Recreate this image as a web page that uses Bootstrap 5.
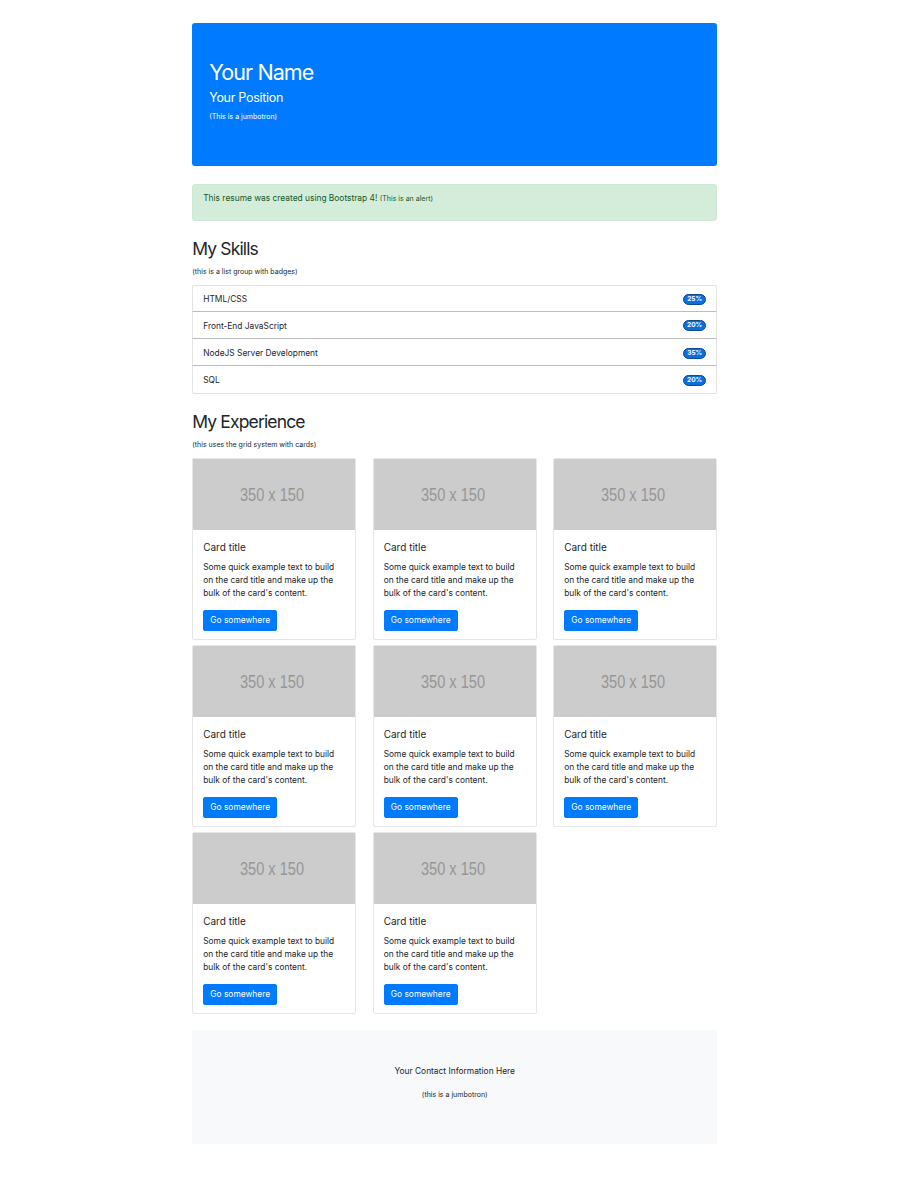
<!DOCTYPE html>
<html lang="en">
<head>
<meta charset="utf-8">
<title>Resume</title>
<link rel="stylesheet" href="https://cdn.jsdelivr.net/npm/bootstrap@5.3.0/dist/css/bootstrap.min.css">
<style>
body{font-family:Inter,"Noto Sans",sans-serif;font-size:8.4px;line-height:1.5;color:#212529;background:#fff;padding-right:5.6px}
.sheet{width:525px;margin:0 auto;padding:23px 0 46px 0}
.hero-top{height:143px;background:#007bff;border-radius:3px;padding:2.5px 17px 0;color:#fff;display:flex;flex-direction:column;justify-content:center}
.hero-top h1{font-size:21.5px;font-weight:400;letter-spacing:-.9px;line-height:1.2;margin:0 0 5px}
.hero-top h2{font-size:12.5px;font-weight:400;letter-spacing:-.3px;line-height:1.2;margin:0 0 7px}
.tiny{font-size:7px;line-height:1.5}
.hero-top .tiny{display:block;margin-bottom:9px}
.note{margin:18px 0 0;height:37px;background:#d4edda;border:1px solid #cde9d4;border-radius:3px;color:#155724;padding:7px 10px;font-size:8.4px}
.head{font-size:17.5px;font-weight:400;letter-spacing:-.85px;line-height:1.2;margin:17px 0 7.5px}
.sub{display:block;font-size:7px;line-height:10px;margin-bottom:8px}
.sub-grid{margin-top:8.5px;margin-bottom:8.4px}
.skills{--bs-list-group-border-radius:2px}
.skills .list-group-item{height:27.25px;padding:2px 10px 0;font-size:8.4px;display:flex;justify-content:space-between;align-items:center;color:#212529;border-color:#e3e3e3;border-bottom-color:#bdbdbd}
.skills .list-group-item:last-child{border-bottom-color:#e3e3e3}
.pct{background:#0b6fe0;border:1px solid #0d4a8f;color:#fff;font-size:6.5px;font-weight:700;border-radius:7px;line-height:9px;padding:0 3px;min-width:23px;text-align:center}
.cards{--bs-gutter-x:16.5px;--bs-gutter-y:5px}
.job{--bs-card-border-radius:2px;--bs-card-inner-border-radius:1px;border-color:#e6e6e6;height:182px}
.ph{display:block;flex:none;width:100%;height:71px;background:#ccc}
.ph text{fill:#969696;font-family:"Liberation Sans",sans-serif;font-size:17.6px;text-anchor:middle}
.job .card-body{padding:10px}
.job .card-title{font-size:10px;font-weight:400;line-height:1.2;margin:.5px 0 8px;color:#212529}
.job .card-text{font-size:8.4px;line-height:13.2px;margin:0 0 9px}
.go{--bs-btn-bg:#007bff;--bs-btn-border-color:#007bff;--bs-btn-hover-bg:#0069d9;--bs-btn-color:#fff;--bs-btn-border-radius:2px;font-size:8.4px;line-height:13px;padding:3px 6px;height:21px;width:74px;white-space:nowrap}
.hero-foot{margin-top:15.6px;height:114px;padding-bottom:9px;background:#f8f9fa;text-align:center;color:#212529;display:flex;flex-direction:column;justify-content:center}
.hero-foot p{font-size:8.4px;margin:0 0 12px;line-height:13px}
.hero-foot .tiny{display:block}
</style>
</head>
<body>
<div class="sheet">
  <div class="hero-top">
    <h1>Your Name</h1>
    <h2>Your Position</h2>
    <span class="tiny">(This is a jumbotron)</span>
  </div>
  <div class="note" role="alert">This resume was created using Bootstrap 4! <span class="tiny">(This is an alert)</span></div>

  <h3 class="head">My Skills</h3>
  <span class="sub">(this is a list group with badges)</span>
  <ul class="list-group skills">
    <li class="list-group-item">HTML/CSS <span class="pct">25%</span></li>
    <li class="list-group-item">Front-End JavaScript <span class="pct">20%</span></li>
    <li class="list-group-item">NodeJS Server Development <span class="pct">35%</span></li>
    <li class="list-group-item">SQL <span class="pct">20%</span></li>
  </ul>

  <h3 class="head">My Experience</h3>
  <span class="sub sub-grid">(this uses the grid system with cards)</span>
  <div class="row cards">
    <div class="col-4"><div class="card job"><svg class="ph" viewBox="0 0 162 71"><text x="79" y="42" textLength="64" lengthAdjust="spacingAndGlyphs">350 x 150</text></svg><div class="card-body"><h5 class="card-title">Card title</h5><p class="card-text">Some quick example text to build on the card title and make up the bulk of the card's content.</p><a href="#" class="btn go">Go somewhere</a></div></div></div>
    <div class="col-4"><div class="card job"><svg class="ph" viewBox="0 0 162 71"><text x="79" y="42" textLength="64" lengthAdjust="spacingAndGlyphs">350 x 150</text></svg><div class="card-body"><h5 class="card-title">Card title</h5><p class="card-text">Some quick example text to build on the card title and make up the bulk of the card's content.</p><a href="#" class="btn go">Go somewhere</a></div></div></div>
    <div class="col-4"><div class="card job"><svg class="ph" viewBox="0 0 162 71"><text x="79" y="42" textLength="64" lengthAdjust="spacingAndGlyphs">350 x 150</text></svg><div class="card-body"><h5 class="card-title">Card title</h5><p class="card-text">Some quick example text to build on the card title and make up the bulk of the card's content.</p><a href="#" class="btn go">Go somewhere</a></div></div></div>
    <div class="col-4"><div class="card job"><svg class="ph" viewBox="0 0 162 71"><text x="79" y="42" textLength="64" lengthAdjust="spacingAndGlyphs">350 x 150</text></svg><div class="card-body"><h5 class="card-title">Card title</h5><p class="card-text">Some quick example text to build on the card title and make up the bulk of the card's content.</p><a href="#" class="btn go">Go somewhere</a></div></div></div>
    <div class="col-4"><div class="card job"><svg class="ph" viewBox="0 0 162 71"><text x="79" y="42" textLength="64" lengthAdjust="spacingAndGlyphs">350 x 150</text></svg><div class="card-body"><h5 class="card-title">Card title</h5><p class="card-text">Some quick example text to build on the card title and make up the bulk of the card's content.</p><a href="#" class="btn go">Go somewhere</a></div></div></div>
    <div class="col-4"><div class="card job"><svg class="ph" viewBox="0 0 162 71"><text x="79" y="42" textLength="64" lengthAdjust="spacingAndGlyphs">350 x 150</text></svg><div class="card-body"><h5 class="card-title">Card title</h5><p class="card-text">Some quick example text to build on the card title and make up the bulk of the card's content.</p><a href="#" class="btn go">Go somewhere</a></div></div></div>
    <div class="col-4"><div class="card job"><svg class="ph" viewBox="0 0 162 71"><text x="79" y="42" textLength="64" lengthAdjust="spacingAndGlyphs">350 x 150</text></svg><div class="card-body"><h5 class="card-title">Card title</h5><p class="card-text">Some quick example text to build on the card title and make up the bulk of the card's content.</p><a href="#" class="btn go">Go somewhere</a></div></div></div>
    <div class="col-4"><div class="card job"><svg class="ph" viewBox="0 0 162 71"><text x="79" y="42" textLength="64" lengthAdjust="spacingAndGlyphs">350 x 150</text></svg><div class="card-body"><h5 class="card-title">Card title</h5><p class="card-text">Some quick example text to build on the card title and make up the bulk of the card's content.</p><a href="#" class="btn go">Go somewhere</a></div></div></div>
  </div>

  <div class="hero-foot">
    <p>Your Contact Information Here</p>
    <span class="tiny">(this is a jumbotron)</span>
  </div>
</div>
<script src="https://cdn.jsdelivr.net/npm/bootstrap@5.3.0/dist/js/bootstrap.bundle.min.js"></script>
</body>
</html>
